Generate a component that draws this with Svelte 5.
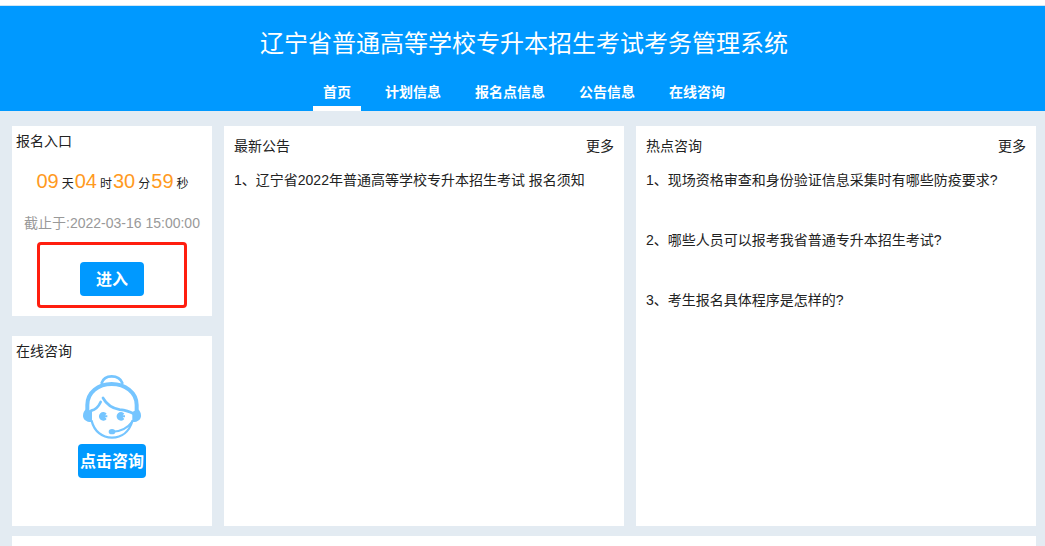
<script>
    const navItems = ["首页", "计划信息", "报名点信息", "公告信息", "在线咨询"];
    let active = $state("首页");

    const countdown = [
        { value: "09", unit: "天" },
        { value: "04", unit: "时" },
        { value: "30", unit: "分" },
        { value: "59", unit: "秒" },
    ];

    const panels = [
        {
            title: "最新公告",
            items: ["1、辽宁省2022年普通高等学校专升本招生考试 报名须知"],
        },
        {
            title: "热点咨询",
            items: [
                "1、现场资格审查和身份验证信息采集时有哪些防疫要求?",
                "2、哪些人员可以报考我省普通专升本招生考试?",
                "3、考生报名具体程序是怎样的?",
            ],
        },
    ];
</script>

<header>
    <h1>辽宁省普通高等学校专升本招生考试考务管理系统</h1>
    <nav>
        {#each navItems as item}
            <a
                href="#top"
                class:active={active === item}
                onclick={() => (active = item)}>{item}</a
            >
        {/each}
    </nav>
</header>

<main>
    <div class="columns">
        <div class="side">
            <section class="card">
                <h2>报名入口</h2>
                <div class="countdown">
                    {#each countdown as part}
                        <b>{part.value}</b><span>{part.unit}</span>
                    {/each}
                </div>
                <p class="deadline">截止于:2022-03-16 15:00:00</p>
                <div class="highlight">
                    <button class="enter">进入</button>
                </div>
            </section>

            <section class="card">
                <h2>在线咨询</h2>
                <div class="consult">
                    <svg viewBox="33 30 174 192" aria-hidden="true">
                        <g fill="none" stroke="#75c5ff" stroke-linecap="round">
                            <!-- bun and headband -->
                            <path d="M89 54C93 41 104 34 119 34S146 41 151 54" stroke-width="8" />
                            <path d="M46 136V120C46 82 79 57 119 57S194 82 194 120V136" stroke-width="12" />
                            <!-- face -->
                            <path d="M59 168C67 199 90 218 120 218S172 199 181 168" stroke-width="7" />
                            <!-- fringe -->
                            <path d="M86 111C80 124 71 134 58 137" stroke-width="8" />
                            <path d="M93 99C103 117 121 130 143 134C162 136 174 140 184 146" stroke-width="8" />
                            <!-- microphone arm -->
                            <path d="M122 200C149 200 166 190 181 170" stroke-width="6" />
                        </g>
                        <g fill="#75c5ff">
                            <path d="M43 132L60 138V171C44 172 33 164 33 152C33 143 37 136 43 132Z" />
                            <path d="M197 132L181 141V171C196 172 207 164 207 152C207 143 203 136 197 132Z" />
                            <ellipse cx="120" cy="200" rx="10" ry="8" />
                            <path d="M104 146A13 13 0 1 0 104 162L99 157H106V151H99Z" />
                            <path d="M157 146A13 13 0 1 0 157 162L152 157H159V151H152Z" />
                        </g>
                    </svg>
                    <button class="ask">点击咨询</button>
                </div>
            </section>
        </div>

        {#each panels as panel}
            <section class="card panel">
                <div class="panel-head">
                    <h2>{panel.title}</h2>
                    <a href="#more">更多</a>
                </div>
                <ul>
                    {#each panel.items as item}
                        <li><a href="#detail">{item}</a></li>
                    {/each}
                </ul>
            </section>
        {/each}
    </div>

    <div class="card bottom"></div>
</main>

<style>
    :global(body) {
        background: #e3ebf2;
        font-family: "Liberation Sans", "Noto Sans CJK SC", sans-serif;
        font-size: 14px;
        color: #222;
    }

    a {
        color: inherit;
        text-decoration: none;
    }

    h1,
    h2,
    p,
    ul {
        margin: 0;
        padding: 0;
    }

    header {
        border-top: 5px solid #fff;
        padding: 0 9px 0 12px;
        background: #0099ff;
        box-shadow: inset 0 1px #cfe6f5;
        color: #fff;
        text-align: center;
    }

    h1 {
        padding-top: 13px;
        font-size: 24px;
        font-weight: 400;
        line-height: 52px;
    }

    nav {
        display: flex;
        justify-content: center;
        gap: 14px;
        padding-top: 8px;
    }

    nav a {
        padding: 0 10px;
        border-bottom: 5px solid transparent;
        font-weight: 700;
        line-height: 28px;
    }

    nav a.active {
        border-bottom-color: #fff;
    }

    main {
        padding: 15px 9px 0 12px;
    }

    .columns {
        display: grid;
        grid-template-columns: 1fr 2fr 2fr;
        gap: 12px;
    }

    .side {
        display: grid;
        gap: 20px;
    }

    .card {
        background: #fff;
    }

    .side .card {
        min-height: 190px;
    }

    h2 {
        padding-left: 4px;
        font-size: 14px;
        font-weight: 400;
        line-height: 30px;
    }

    .countdown {
        display: flex;
        justify-content: center;
        align-items: baseline;
        padding: 10px 0 0 2px;
        line-height: 30px;
    }

    .countdown b {
        color: #ff9a1e;
        font-size: 20px;
        font-weight: 400;
    }

    .countdown span {
        margin: 0 1px 0 3px;
        font-size: 12px;
    }

    .deadline {
        padding: 9px 0 4px;
        color: #999;
        line-height: 30px;
        text-align: center;
    }

    .highlight {
        box-sizing: border-box;
        width: 75%;
        margin: 0 auto;
        padding: 17px 0 9px;
        border: 3px solid #ff1e0f;
        border-radius: 4px;
        text-align: center;
    }

    button {
        display: block;
        height: 34px;
        margin: 0 auto;
        border: 0;
        border-radius: 4px;
        background: #0099ff;
        color: #fff;
        font-family: inherit;
        font-size: 16px;
        font-weight: 700;
        cursor: pointer;
    }

    .enter {
        padding: 0 16px 2px;
    }

    .ask {
        padding: 0 2px 2px;
    }

    .consult svg {
        display: block;
        width: 58px;
        height: 64px;
        margin: 9px auto 5px;
    }

    .panel {
        padding: 5px 10px;
    }

    .panel-head {
        display: flex;
        justify-content: space-between;
        line-height: 30px;
    }

    .panel h2 {
        padding: 0;
    }

    ul {
        display: grid;
        gap: 30px;
        padding-top: 4px;
        list-style: none;
        line-height: 30px;
    }

    .bottom {
        min-height: 10px;
        margin-top: 10px;
    }
</style>
